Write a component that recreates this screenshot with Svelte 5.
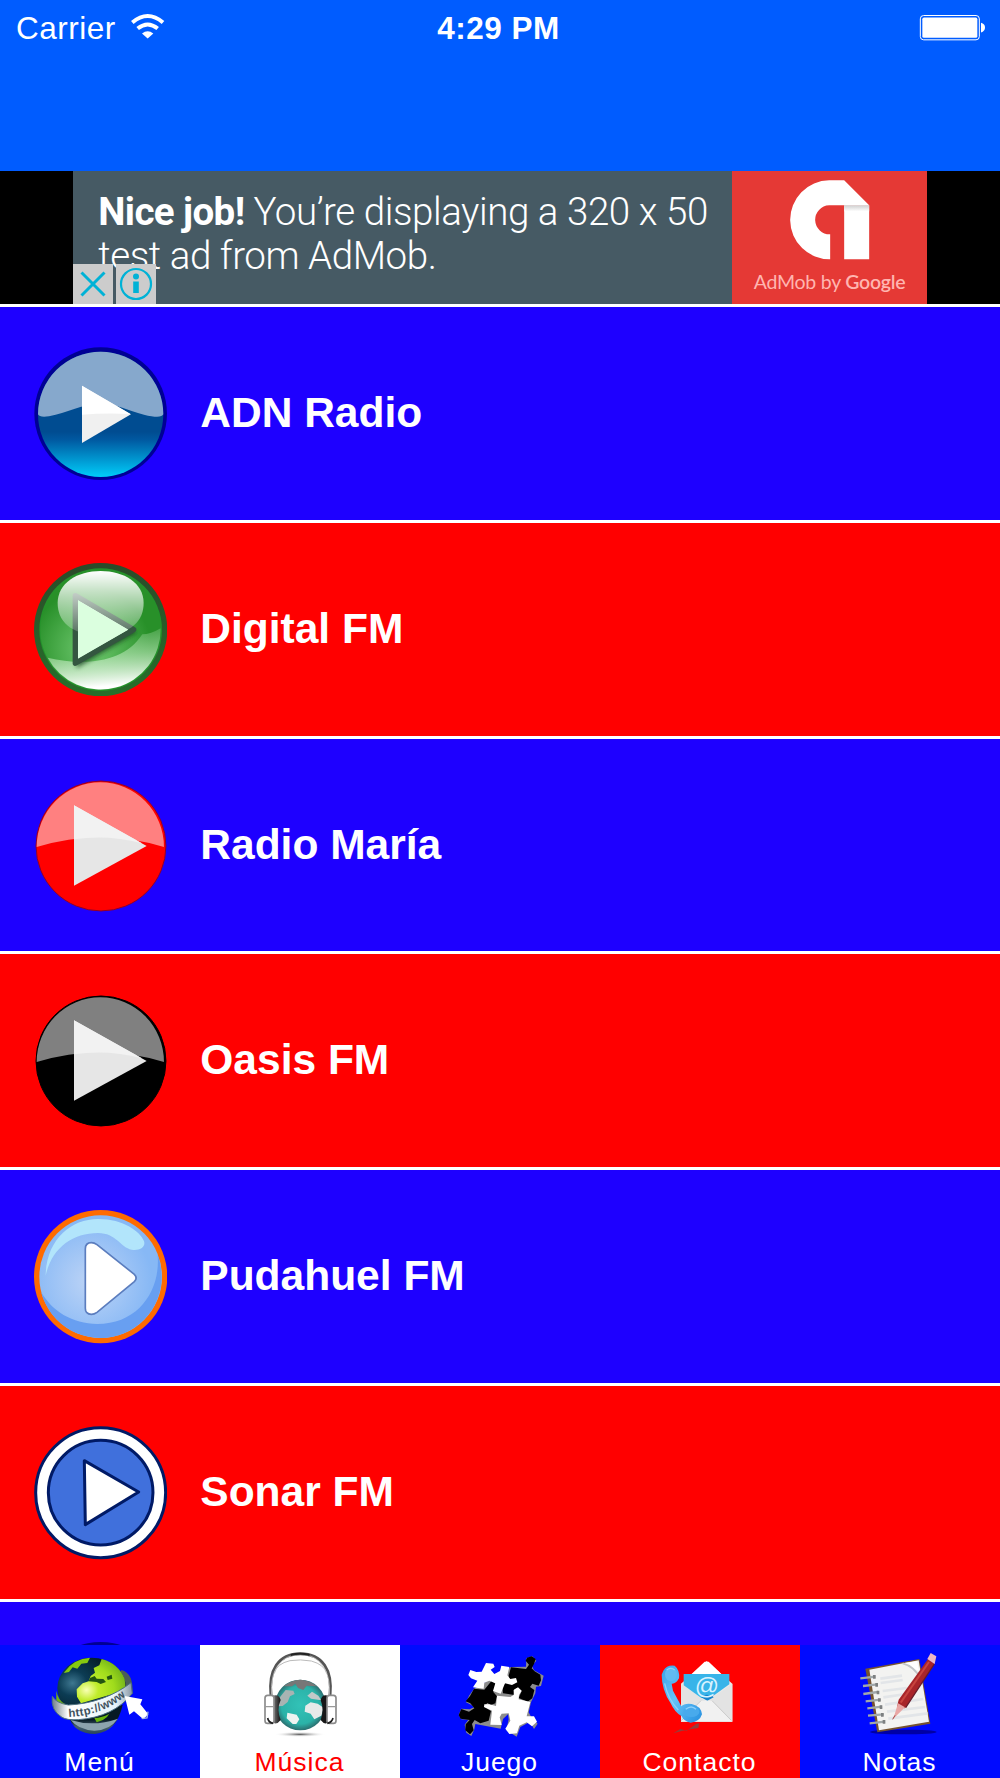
<script>
    let selected = "musica";

    const stations = [
        { name: "ADN Radio", icon: "wave" },
        { name: "Digital FM", icon: "glossy" },
        { name: "Radio María", icon: "flat", color: "#ff0000", light: "#ff8080", ring: "#8a0030" },
        { name: "Oasis FM", icon: "flat", color: "#000000", light: "#808080", ring: "#000000" },
        { name: "Pudahuel FM", icon: "bubble" },
        { name: "Sonar FM", icon: "ring" },
        { name: "", icon: "dark" },
    ];

    const tabs = [
        { id: "menu", label: "Menú" },
        { id: "musica", label: "Música" },
        { id: "juego", label: "Juego" },
        { id: "contacto", label: "Contacto" },
        { id: "notas", label: "Notas" },
    ];
</script>

<div class="app">
    <header>
        <div class="carrier">
            <span>Carrier</span>
            <svg class="wifi" viewBox="390 40 105 80">
                <path d="M397 68Q443 29 489 68" fill="none" stroke="#fff" stroke-width="12" />
                <path d="M413 86Q443 62 473 86" fill="none" stroke="#fff" stroke-width="12" />
                <path d="M426 101Q443 87 460 101L443 116Z" fill="#fff" />
            </svg>
        </div>
        <span class="time">4:29 PM</span>
        <div class="power">
            <svg class="battery" viewBox="1258 42 201 80">
                <rect x="1262" y="46" width="177" height="73" rx="10" fill="none" stroke="#fff" stroke-width="3" />
                <rect x="1268" y="52" width="165" height="61" rx="5" fill="#fff" />
                <path d="M1444 68Q1456 71 1456 82Q1456 93 1444 97Z" fill="#fff" />
            </svg>
        </div>
    </header>

    <div class="banner">
        <div class="ad">
            <div class="ad-text">
                <div class="first"><b>Nice job!</b> You’re displaying a 320 x 50</div>
                <div class="second">test ad from AdMob.</div>
            </div>
            <div class="ad-logo">
                <svg viewBox="866 540 242 240">
                    <defs>
                        <linearGradient id="fold" x1="0" y1="0" x2="0" y2="1">
                            <stop offset="0" stop-color="#cfcfcf" />
                            <stop offset="1" stop-color="#fff" />
                        </linearGradient>
                    </defs>
                    <path d="M1031 541H986A118 118 0 0 0 989 778V703A43 43 0 0 1 986 616H1106Z" fill="#fff" />
                    <path d="M1031 616H1106V778H1031Z" fill="#fff" />
                    <path d="M1031 616H1106V634H1031Z" fill="url(#fold)" />
                </svg>
                <span>AdMob by <b>Google</b></span>
            </div>
            <div class="ad-buttons">
                <svg viewBox="0 0 40 40">
                    <path d="M8.500 8.500L31.500 31.500M31.500 8.500L8.500 31.500" fill="none" stroke="#00b2d6" stroke-width="3" />
                </svg>
                <svg viewBox="0 0 40 40">
                    <circle cx="20" cy="20" r="15" fill="none" stroke="#00b2d6" stroke-width="2.200" />
                    <circle cx="20" cy="12.500" r="3" fill="#00b2d6" />
                    <path d="M17.200 17.500H22.800V29H17.200Z" fill="#00b2d6" />
                </svg>
            </div>
        </div>
    </div>

    <ul class="stations">
        {#each stations as station}
            <li>
                {#if station.icon == "wave"}
                    <svg class="play" viewBox="100 78 400 400">
                        <defs>
                            <linearGradient id="sea" x1="0" y1="0" x2="0" y2="1">
                                <stop offset="0.64" stop-color="#004c91" />
                                <stop offset="0.7" stop-color="#0058a0" />
                                <stop offset="1" stop-color="#00cdfa" />
                            </linearGradient>
                        </defs>
                        <circle cx="300" cy="278" r="199" fill="#000094" />
                        <circle cx="300" cy="280" r="188" fill="url(#sea)" />
                        <path d="M112 280A188 188 0 0 1 488 280Q482 294 430 281C380 268 350 249 300 249C240 249 200 276 145 286Q116 290 112 280Z" fill="#86a8cc" />
                        <path d="M244 194L391 280L244 366Z" fill="#f0f0f0" />
                        <path d="M244 194L389 279Q310 276 244 281Z" fill="#fff" />
                    </svg>
                {:else if station.icon == "glossy"}
                    <svg class="play" viewBox="100 66 400 400">
                        <defs>
                            <linearGradient id="rim" x1="0" y1="0" x2="0" y2="1">
                                <stop offset="0" stop-color="#2b4a29" />
                                <stop offset="1" stop-color="#27702a" />
                            </linearGradient>
                            <radialGradient id="leaf" cx="0.42" cy="0.66" r="0.5">
                                <stop offset="0" stop-color="#72cb72" />
                                <stop offset="1" stop-color="#289029" />
                            </radialGradient>
                            <linearGradient id="shine" x1="0" y1="0" x2="0" y2="1">
                                <stop offset="0" stop-color="#fff" />
                                <stop offset="1" stop-color="#fff" stop-opacity="0.15" />
                            </linearGradient>
                            <linearGradient id="floor" x1="0" y1="0" x2="0.15" y2="1">
                                <stop offset="0" stop-color="#a5dda3" stop-opacity="0.1" />
                                <stop offset="0.5" stop-color="#b0e2ae" stop-opacity="0.65" />
                                <stop offset="1" stop-color="#fff" />
                            </linearGradient>
                            <filter id="soft">
                                <feGaussianBlur stdDeviation="6" />
                            </filter>
                        </defs>
                        <circle cx="300" cy="266" r="200" fill="url(#rim)" />
                        <circle cx="300" cy="266" r="184" fill="#23922a" />
                        <circle cx="300" cy="266" r="181" fill="url(#leaf)" />
                        <path d="M141 350C250 376 370 366 425 280Q450 280 480 262A180 180 0 0 1 141 350Z" fill="url(#floor)" />
                        <path d="M228 170L410 274L228 382Z" fill="#183d1b" opacity="0.7" filter="url(#soft)" />
                        <path d="M224 164L399 266L224 367Z" fill="#dbffdf" stroke="#345640" stroke-width="16" stroke-linejoin="round" />
                        <path d="M171 186C171 126 230 90 300 90S429 126 429 186C429 237 395 282 300 282S171 237 171 186Z" fill="url(#shine)" />
                        <path d="M232 178L382 266L232 352Z" fill="#dbffdf" />
                    </svg>
                {:else if station.icon == "flat"}
                    <svg class="play" viewBox="100 85 400 400">
                        <circle cx="301" cy="286" r="195" fill={station.color} stroke={station.ring} stroke-width="3" />
                        <path d="M108 289A191 194 0 0 1 490 289Q300 230 108 289Z" fill={station.light} />
                        <path d="M220 164L438 286L220 405Z" fill="#e6e6e6" />
                        <path d="M220 164L424 278Q320 250 220 266Z" fill="#f2f2f2" />
                    </svg>
                {:else if station.icon == "bubble"}
                    <svg class="play" viewBox="100 90 400 400">
                        <defs>
                            <radialGradient id="sky" cx="0.42" cy="0.54" r="0.5">
                                <stop offset="0" stop-color="#bdd4f6" />
                                <stop offset="1" stop-color="#87b8f5" />
                            </radialGradient>
                        </defs>
                        <circle cx="300" cy="290" r="200" fill="#ff6a00" />
                        <circle cx="300" cy="290" r="184" fill="url(#sky)" />
                        <path d="M471 225C480 330 415 432 290 432C215 430 155 395 121 335A183.750 183.750 0 1 0 471 225Z" fill="#689ff1" />
                        <path d="M135 287C137 180 210 117 292 117C370 117 418 155 430 183C437 204 413 213 393 209C360 203 347 159 292 159C215 159 153 205 135 287Z" fill="#b2e5fb" />
                        <path d="M254 207Q254 188 272 188Q281 188 289 194L401 283Q412 294 401 305L289 397Q281 403 272 403Q254 403 254 385Z" fill="#fff" stroke="#5b7dbe" stroke-width="5" />
                    </svg>
                {:else if station.icon == "ring"}
                    <svg class="play" viewBox="100 78 400 400">
                        <circle cx="300" cy="278" r="195" fill="#fff" stroke="#001a66" stroke-width="9" />
                        <circle cx="300" cy="278" r="157" fill="#4070dc" stroke="#001a66" stroke-width="9" />
                        <path d="M251 182L414 276L254 374Z" fill="#fff" stroke="#001a66" stroke-width="9" stroke-linejoin="round" />
                    </svg>
                {:else}
                    <svg class="play" viewBox="0 0 400 400">
                        <circle cx="200" cy="200" r="200" fill="#000094" />
                    </svg>
                {/if}
                <span>{station.name}</span>
            </li>
        {/each}
    </ul>

    <nav>
        {#each tabs as tab}
            <button
                class={tab.id}
                class:active={selected == tab.id}
                on:click={() => (selected = tab.id)}
            >
                {#if tab.id == "menu"}
                    <svg viewBox="150 180 300 270">
                        <defs>
                            <radialGradient id="ocean" cx="0.22" cy="0.42" r="0.6">
                                <stop offset="0" stop-color="#3e7790" />
                                <stop offset="0.35" stop-color="#0c3c54" />
                                <stop offset="1" stop-color="#031a22" />
                            </radialGradient>
                            <radialGradient id="land" cx="0.2" cy="0.7" r="0.8">
                                <stop offset="0" stop-color="#f9ffb4" />
                                <stop offset="0.3" stop-color="#c0ec2a" />
                                <stop offset="0.7" stop-color="#a0dc1c" />
                                <stop offset="1" stop-color="#78b81a" />
                            </radialGradient>
                            <linearGradient id="band" x1="0" y1="0" x2="1" y2="0">
                                <stop offset="0" stop-color="#6f7d88" />
                                <stop offset="0.2" stop-color="#fff" />
                                <stop offset="0.8" stop-color="#e6f3fa" />
                                <stop offset="1" stop-color="#8896a4" />
                            </linearGradient>
                            <linearGradient id="base" x1="0" y1="0" x2="0" y2="1">
                                <stop offset="0.5" stop-color="#071a24" />
                                <stop offset="0.75" stop-color="#47606c" />
                                <stop offset="1" stop-color="#28445c" />
                            </linearGradient>
                            <path id="ribbon" d="M206 381C280 378 345 350 393 304" />
                        </defs>
                        <path d="M205 375Q220 432 285 432Q350 426 368 345Z" fill="url(#base)" />
                        <path d="M212 390Q280 412 354 386Q330 420 283 422Q234 419 212 390Z" fill="#8da4ae" />
                        <path d="M278 374L335 352Q328 390 290 397Z" fill="#68b80c" />
                        <path d="M364 240Q402 250 397 312L372 320L360 250Z" fill="#4b5e58" />
                        <ellipse cx="275" cy="294" rx="103" ry="91" fill="url(#ocean)" />
                        <path d="M194 245Q222 206 270 203L262 219L244 221L232 236L218 232L207 246L192 249Z" fill="#86c90f" />
                        <path d="M305 207Q357 221 374 268L378 301L326 316L243 340L231 320L230 298L248 280L266 274L272 258L285 248L281 234L298 226Z" fill="url(#land)" />
                        <path d="M266 274L290 276L302 282L318 276L310 267L290 266L284 258L270 264ZM320 260L335 254L337 266L323 270Z" fill="#245512" />
                        <path d="M169 302Q174 331 196 343L184 351L169 332Z" fill="#72b60b" />
                        <path d="M157 319Q151 361 186 382Q201 391 235 389C305 384 360 358 397 310L393 278C344 317 275 342 205 345Q168 339 157 319Z" fill="url(#band)" stroke="#4d7182" stroke-width="3" />
                        <text class="address"><textPath href="#ribbon" textLength="186">http://www</textPath></text>
                        <path d="M374 318L427 328L421 343L445 373L430 388L402 364L388 374Z" fill="#fff" />
                        <path d="M425 386L441 384L444 365" fill="none" stroke="#a6b7e0" stroke-width="4" />
                    </svg>
                {:else if tab.id == "musica"}
                    <svg viewBox="750 180 300 270">
                        <defs>
                            <radialGradient id="teal" cx="0.5" cy="0.5" r="0.5">
                                <stop offset="0" stop-color="#32c2b7" />
                                <stop offset="0.75" stop-color="#2bb2a8" />
                                <stop offset="1" stop-color="#2b6f70" />
                            </radialGradient>
                            <radialGradient id="shade">
                                <stop offset="0" stop-color="#555" />
                                <stop offset="1" stop-color="#fff" stop-opacity="0" />
                            </radialGradient>
                            <linearGradient id="pad" x1="0" y1="0" x2="1" y2="0">
                                <stop offset="0" stop-color="#888" />
                                <stop offset="1" stop-color="#111" />
                            </linearGradient>
                        </defs>
                        <ellipse cx="900" cy="433" rx="78" ry="8" fill="url(#shade)" />
                        <path d="M813 317C805 240 835 191 901 191S998 240 990 317" fill="none" stroke="#555" stroke-width="9" />
                        <path d="M815 317C809 240 842 194 901 194S993 240 988 317" fill="none" stroke="#ddd" stroke-width="2" />
                        <path d="M823 250Q830 221 870 212Q901 207 934 213Q973 224 980 250" fill="none" stroke="#bbb" stroke-width="3" />
                        <path d="M872 195Q900 188 929 195" fill="none" stroke="#222" stroke-width="6" />
                        <circle cx="901" cy="345" r="76" fill="url(#teal)" />
                        <path d="M850 289Q900 250 952 289L920 287L910 300L894 294L886 281L876 289Z" fill="#777" />
                        <path d="M836 326L857 300L880 302L884 312L870 319L863 336L848 348L832 349Z" fill="#a8b3b2" />
                        <path d="M862 368L890 374L898 388L889 402L878 402L860 385Z" fill="#edf3f0" />
                        <path d="M916 347L932 337L953 341L971 353L964 377L943 388L932 371L914 365Z" fill="#e7eae9" />
                        <path d="M922 317L936 305L955 317L964 331L933 326Z" fill="#c1c9c8" />
                        <path d="M816 318Q837 310 842 330Q829 358 842 390Q830 406 817 397Z" fill="url(#pad)" />
                        <path d="M986 318Q967 310 962 330Q973 358 962 390Q974 406 985 397Z" fill="#171717" />
                        <rect x="795" y="316" width="27" height="84" rx="8" fill="#fff" stroke="#8b8b8b" stroke-width="5" />
                        <rect x="981" y="316" width="27" height="84" rx="8" fill="#fff" stroke="#8b8b8b" stroke-width="5" />
                        <path d="M795 350H821M982 350H1007" stroke="#999" stroke-width="4" />
                        <path d="M803 384Q805 397 819 400M999 384Q996 397 982 400" fill="none" stroke="#222" stroke-width="5" />
                    </svg>
                {:else if tab.id == "juego"}
                    <svg viewBox="150 180 300 270">
                        <path d="M222 296L208 316L198 337L213 344L222 352L209 358L184 356L176 374L184 388L205 389L194 404L199 428L214 438L223 418L226 402L302 416L309 387L324 373L326 388L319 421L350 440L361 411L390 395L402 417L413 401L394 382L386 367L393 337L406 310L408 290L423 288L431 257L402 241L396 228L409 212L397 199L379 205L378 230L333 231Z" fill="#8c8c8c" />
                        <path d="M333 232L378 237L387 224L377 212L381 203L395 199L407 207L402 222L395 235L404 244L421 254L423 271L416 287L397 281L390 291L403 300L397 325L383 335L356 324L365 303L350 294L340 301L343 315L309 310L307 287L326 271L326 257Z" fill="#000" />
                        <path d="M222 296L253 299L275 272L288 283L280 306L291 319L286 340L272 345L262 339L252 350L273 363L266 392L241 400L224 390L216 402L221 421L210 433L196 421L197 403L209 390L182 386L176 375L184 357L207 365L223 355L211 340L197 334L210 318Z" fill="#000" />
                        <path d="M229 246L245 245L258 219L280 221L284 231L272 239L283 252L300 243L304 227L328 231L322 256L331 267L348 264L352 277L336 285L315 280L302 311L279 303L286 280L268 272L253 278L251 296L219 292L232 272L213 265L205 255L211 240Z" fill="#fff" />
                        <path d="M291 317L331 321L341 315L342 299L354 292L365 302L357 315L356 328L391 336L380 379L402 379L411 395L396 409L380 397L358 407L351 430L328 432L316 416L331 392L326 370L305 371L299 382L305 405L271 404L276 362L252 351L253 343L268 343L288 348Z" fill="#fff" />
                    </svg>
                {:else if tab.id == "contacto"}
                    <svg viewBox="750 180 300 270">
                        <defs>
                            <linearGradient id="phone" x1="0" y1="0" x2="1" y2="1">
                                <stop offset="0" stop-color="#38a1e8" />
                                <stop offset="0.45" stop-color="#65c3f9" />
                                <stop offset="1" stop-color="#258fdf" />
                            </linearGradient>
                        </defs>
                        <path d="M843 281L920 213L997 281V395H843Z" fill="#e9e9e9" />
                        <path d="M874 253L914 215H926L965 253Z" fill="#fff" />
                        <path d="M843 281L919 335L997 281V395H843Z" fill="#e3e3e3" />
                        <path d="M851 252H988V283L932 323H903L851 286Z" fill="#38b4e9" />
                        <path d="M903 322L918 314L935 316L941 322L922 332Z" fill="#1685cd" />
                        <text class="at" x="921" y="312" text-anchor="middle">@</text>
                        <path d="M844 394L903 332H936L995 394Z" fill="#f1f1f1" />
                        <path d="M844 392L903 332M936 332L994 391" stroke="#bcbcbc" stroke-width="2" />
                        <path d="M820 430L841 417L860 422L888 402L898 400L895 414L875 417L845 423Z" fill="#74504c" opacity="0.75" />
                        <path d="M790 242Q800 224 824 227Q840 240 837 265Q828 282 815 281L819 302L844 349Q853 339 875 342Q903 348 906 373Q899 395 872 398Q851 394 845 379Q824 367 812 340Q785 299 785 254Z" fill="url(#phone)" />
                        <ellipse cx="813" cy="253" rx="18" ry="21" fill="#61baf1" />
                        <ellipse cx="874" cy="365" rx="24" ry="16" fill="#48aaec" />
                        <path d="M800 240Q812 230 824 240M857 358Q874 344 888 358M794 280Q804 328 835 360" fill="none" stroke="#8cd0fa" stroke-width="4" />
                    </svg>
                {:else}
                    <svg viewBox="270 180 300 270">
                        <ellipse cx="430" cy="426" rx="100" ry="7" fill="#0000a5" />
                        <path d="M316 236L478 207L511 401L352 427Z" fill="#76532f" />
                        <path d="M328 239L476 211L507 395L357 421Z" fill="#f3f3f1" />
                        <path d="M428 220L477 243L471 214Z" fill="#fff" />
                        <path d="M428 220Q464 229 481 266" fill="none" stroke="#c1c4c7" stroke-width="5" />
                        <path d="M361 266L426 257M362 279L428 270M368 303L440 294M370 322L438 312M375 344L490 327M381 365L495 351M385 386L503 370" stroke="#e2e5e8" stroke-width="8" />
                        <path d="M301 265L346 260M309 288L353 283M310 312L354 306M317 334L362 329M322 355L366 350M324 377L371 373M329 400L375 395" stroke="#a1a8a9" stroke-width="7" />
                        <path d="M343 255V266M350 279V290M354 302V313M358 325V335M363 346V357M367 369V380M372 390V401" stroke="#7d8081" stroke-width="8" />
                        <path d="M504 207L524 221L435 355L411 351L416 329Z" fill="#a8252a" />
                        <path d="M507 216L422 338" stroke="#c8443f" stroke-width="6" />
                        <path d="M523 222L437 353" stroke="#681a28" stroke-width="4" />
                        <path d="M502 207L512 189L529 199L524 222Z" fill="#eeb7c3" />
                        <path d="M414 340L435 352L400 386Z" fill="#e9a7a5" />
                        <path d="M398 388L405 376" stroke="#a54849" stroke-width="3" />
                    </svg>
                {/if}
                <span>{tab.label}</span>
            </button>
        {/each}
    </nav>
</div>

<style>
    :global(body) {
        margin: 0;
    }

    .app {
        display: flex;
        flex-direction: column;
        width: 1000px;
        height: 1778px;
        overflow: hidden;
        color: #fff;
        font-family: "Liberation Sans", Arial, sans-serif;
    }

    header {
        display: grid;
        grid-template-columns: 1fr auto 1fr;
        align-items: start;
        height: 171px;
        padding: 10px 16px 0;
        box-sizing: border-box;
        background: #005cff;
        font-size: 31.5px;
        line-height: 36px;
        letter-spacing: 0.5px;
    }

    .carrier {
        display: flex;
        gap: 14px;
    }

    .wifi {
        width: 35px;
        height: 27px;
        margin-top: 3px;
    }

    .time {
        margin-right: 3px;
        font-weight: bold;
    }

    .power {
        display: flex;
        justify-content: flex-end;
        margin-right: -2px;
    }

    .battery {
        width: 67px;
        height: 27px;
        margin-top: 4px;
    }

    .banner {
        display: flex;
        justify-content: center;
        height: 132.7px;
        background: #000;
    }

    .ad {
        position: relative;
        display: flex;
        width: 853.5px;
        background: #465a64;
        font-family: Roboto, sans-serif;
    }

    .ad-text {
        flex: 1;
        padding: 19px 0 0 25px;
        box-sizing: border-box;
        font-size: 38.5px;
        font-weight: 300;
        line-height: 44px;
        letter-spacing: -0.43px;
        white-space: nowrap;
    }

    .ad-text b {
        font-weight: 700;
        letter-spacing: -0.6px;
    }

    .ad-logo {
        display: flex;
        flex-direction: column;
        align-items: center;
        width: 194.5px;
        background: #e53935;
    }

    .ad-logo svg {
        width: 81px;
        height: 80px;
        margin-top: 9px;
    }

    .ad-logo span {
        margin-top: 10px;
        color: #ffb5b0;
        font-family: Lato, sans-serif;
        font-size: 19.5px;
        line-height: 24px;
        letter-spacing: -0.25px;
        white-space: nowrap;
    }

    .ad-logo b {
        font-weight: 600;
    }

    .ad-buttons {
        position: absolute;
        left: 0;
        bottom: 0;
        display: flex;
        gap: 2.5px;
    }

    .ad-buttons svg {
        width: 40px;
        height: 40px;
        background: #ccc;
    }

    .stations {
        flex: 1;
        min-height: 0;
        margin: 0;
        padding: 0;
        overflow: hidden;
    }

    li {
        display: flex;
        align-items: flex-start;
        height: 215.92px;
        box-sizing: border-box;
        border-top: 3px solid #fff;
        background: #1e00ff;
        list-style: none;
    }

    li:nth-child(even) {
        background: #ff0000;
    }

    .play {
        width: 133.3px;
        height: 133.3px;
        margin: 40px 33.5px 0 33.5px;
    }

    li span {
        margin-top: 82px;
        font-size: 42.5px;
        font-weight: bold;
        line-height: 48px;
    }

    nav {
        display: flex;
        height: 133.5px;
    }

    button {
        display: flex;
        flex-direction: column;
        align-items: center;
        width: 200px;
        padding: 5.5px 0 0;
        border: 0;
        background: #000aff;
        color: #fff;
        font-family: inherit;
        cursor: pointer;
    }

    button.contacto {
        background: #ff0000;
    }

    button.active {
        background: #fff;
        color: #ff0000;
    }

    button svg {
        width: 100px;
        height: 90px;
    }

    button span {
        margin: 7px 1px 0 0;
        font-size: 26.5px;
        line-height: 30px;
        letter-spacing: 1px;
    }

    .at {
        fill: #d7f2ff;
        font-size: 72px;
        font-family: "Liberation Sans", sans-serif;
    }

    .address {
        fill: #3e525d;
        font-size: 34px;
        font-weight: bold;
        font-family: "Liberation Sans", sans-serif;
    }
</style>
